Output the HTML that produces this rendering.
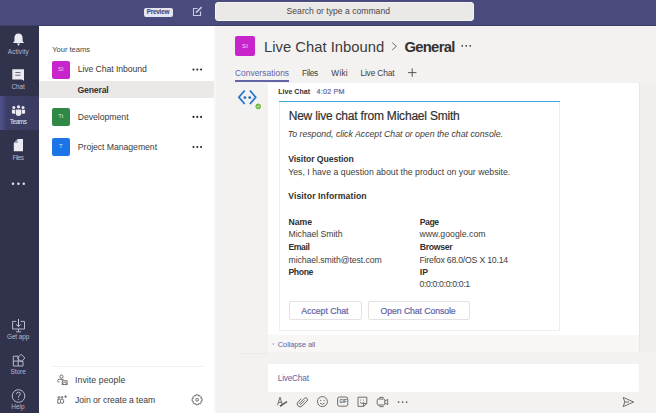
<!DOCTYPE html>
<html><head><meta charset="utf-8">
<style>
*{margin:0;padding:0;box-sizing:border-box}
html,body{width:656px;height:413px;overflow:hidden;font-family:"Liberation Sans",sans-serif;background:#f3f2f1;position:relative}
.a{position:absolute}
.x{position:absolute;white-space:nowrap;line-height:1}
svg{position:absolute;overflow:visible}
</style></head><body>
<!-- top bar -->
<div class="a" style="left:0;top:0;width:656px;height:25.5px;background:#4a4b7c;border-bottom:0.8px solid #3d3e68"></div>
<div class="a" style="left:144px;top:7.5px;width:28.5px;height:9px;background:#e4e4f3;border-radius:2px"></div>
<div class="x" style="left:146.7px;top:9.4px;font-size:6.4px;letter-spacing:-0.233px;color:#3f4070;font-weight:bold;">Preview</div>
<svg style="left:0;top:0" width="656" height="25">
 <path d="M197.5 8.5 H193.5 V15.5 H200.5 V11.5" fill="none" stroke="#c9c9e6" stroke-width="1.1"/>
 <path d="M196 12.6 L201.6 7.2" fill="none" stroke="#c9c9e6" stroke-width="1.6"/>
</svg>
<div class="a" style="left:214.5px;top:1.5px;width:259.5px;height:19.5px;background:#ebe9e8;border:1px solid #f5f4f4;border-radius:3px"></div>
<div class="x" style="left:286.6px;top:7.3px;font-size:8.6px;letter-spacing:0.009px;color:#4a4847;">Search or type a command</div>

<!-- rail -->
<div class="a" style="left:0;top:25.5px;width:39.4px;height:388px;background:#31334c"></div>
<div class="a" style="left:0;top:96px;width:39.4px;height:34.4px;background:linear-gradient(90deg,#51538e 0,#4a4c84 2px,#3c3e66 7px,#3b3c60 100%)"></div>
<svg style="left:0;top:0" width="39" height="413">
 <!-- bell -->
 <path d="M18.5 33.6 C15.8 33.6 14.4 35.6 14.4 38.2 V41.3 L12.8 43.1 H24.2 L22.6 41.3 V38.2 C22.6 35.6 21.2 33.6 18.5 33.6 Z" fill="#ebebf1"/>
 <path d="M17 43.6 H20 L18.5 46 Z" fill="#ebebf1"/>
 <!-- chat -->
 <path d="M12.3 69.3 H24 V80.8 L21.6 79.4 H12.3 Z" fill="#ebebf1"/>
 <rect x="15.3" y="72" width="5.2" height="1" fill="#6a6a80"/>
 <rect x="15.3" y="74.7" width="5.2" height="1" fill="#6a6a80"/>
 <!-- teams -->
 <circle cx="13.8" cy="107.4" r="1.5" fill="#ebebf1"/>
 <circle cx="18.5" cy="106.8" r="1.6" fill="#ebebf1"/>
 <circle cx="23" cy="107.4" r="1.5" fill="#ebebf1"/>
 <path d="M11.9 109.8 H15.3 V113.8 H13 Q11.9 113.8 11.9 112.5 Z" fill="#ebebf1"/>
 <path d="M21.7 109.8 H25.1 V112.5 Q25.1 113.8 24 113.8 H21.7 Z" fill="#ebebf1"/>
 <path d="M15.9 109.4 H21.1 V114 Q21.1 116.1 18.5 116.1 Q15.9 116.1 15.9 114 Z" fill="#ebebf1"/>
 <!-- files -->
 <path d="M17.7 138.9 H23 V151.2 H13.8 V142.9 Z" fill="#ebebf1"/>
 <path d="M13.8 142.9 L17.7 138.9 V142.9 Z" fill="#9a9ab8"/>
 <!-- dots -->
 <circle cx="13" cy="183.7" r="1.2" fill="#e6e6ee"/>
 <circle cx="18.4" cy="183.7" r="1.2" fill="#e6e6ee"/>
 <circle cx="23.8" cy="183.7" r="1.2" fill="#e6e6ee"/>
 <!-- get app -->
 <path d="M16.3 321.4 H12.6 V329 H24.5 V321.4 H20.7" fill="none" stroke="#b9b9cf" stroke-width="1"/>
 <path d="M18.5 319 V326.5 M16.2 324.4 L18.5 326.7 L20.8 324.4" fill="none" stroke="#c9c9dd" stroke-width="1"/>
 <path d="M18.5 329 V331.5 M16 331.8 H21" fill="none" stroke="#b9b9cf" stroke-width="1"/>
 <!-- store -->
 <path d="M13.3 356.2 H18.2 V366 H13.3 Z M13.3 361.1 H23 V366 H18.2" fill="none" stroke="#b9b9cf" stroke-width="1"/>
 <path d="M21.1 354.3 L24.9 358 L21.1 361.7 L17.4 358 Z" fill="none" stroke="#b9b9cf" stroke-width="1"/>
 <!-- help -->
 <circle cx="18.5" cy="396" r="6.3" fill="none" stroke="#b9b9cf" stroke-width="1"/>
 <path d="M16.5 394.2 Q16.6 392.2 18.5 392.2 Q20.4 392.2 20.4 394 Q20.4 395.2 18.5 396.2 V397.6" fill="none" stroke="#b9b9cf" stroke-width="1"/>
 <circle cx="18.5" cy="399.5" r="0.6" fill="#b9b9cf"/>
</svg>
<div class="x" style="left:7.8px;top:49.0px;font-size:6.4px;letter-spacing:0.1px;color:#b8b9cc;">Activity</div><div class="x" style="left:11.6px;top:83.9px;font-size:6.4px;letter-spacing:-0.133px;color:#b8b9cc;">Chat</div><div class="x" style="left:9.7px;top:119.4px;font-size:6.4px;letter-spacing:-0.375px;color:#e8e8f0;">Teams</div><div class="x" style="left:12.6px;top:154.6px;font-size:6.4px;letter-spacing:-0.55px;color:#b8b9cc;">Files</div><div class="x" style="left:7.0px;top:334.2px;font-size:6.4px;letter-spacing:-0.083px;color:#b8b9cc;">Get app</div><div class="x" style="left:10.5px;top:369.2px;font-size:6.4px;letter-spacing:0.0px;color:#b8b9cc;">Store</div><div class="x" style="left:11.3px;top:404.4px;font-size:6.4px;letter-spacing:0.033px;color:#b8b9cc;">Help</div>

<!-- teams panel -->
<div class="a" style="left:39.4px;top:25.5px;width:175.6px;height:388px;background:#fff"></div>
<div class="a" style="left:213px;top:25.5px;width:3px;height:388px;background:linear-gradient(90deg,#fff,#f3f2f1)"></div>
<div class="x" style="left:52.3px;top:46.0px;font-size:7.6px;letter-spacing:-0.044px;color:#484644;">Your teams</div>
<div class="a" style="left:52.2px;top:61px;width:17.4px;height:17.5px;background:#c824cc;border-radius:2px"></div>
<div class="x" style="left:52.2px;top:61px;width:17.4px;height:17.5px;line-height:17.5px;text-align:center;font-size:6px;color:#f3c8f4">SI</div>
<div class="x" style="left:77.7px;top:65.2px;font-size:8.7px;letter-spacing:-0.087px;color:#3d3c3b;">Live Chat Inbound</div>
<div class="a" style="left:39.4px;top:81px;width:175px;height:17px;background:#eae9e8"></div>
<div class="x" style="left:77.4px;top:85.8px;font-size:8.7px;letter-spacing:-0.167px;color:#323130;font-weight:bold;">General</div>
<div class="a" style="left:52.2px;top:108px;width:17.4px;height:17.5px;background:#2f8845;border-radius:2px"></div>
<div class="x" style="left:52.2px;top:108px;width:17.4px;height:17.5px;line-height:17.5px;text-align:center;font-size:6px;color:#cfe6d4">Tt</div>
<div class="x" style="left:77.7px;top:112.6px;font-size:8.7px;letter-spacing:-0.03px;color:#3d3c3b;">Development</div>
<div class="a" style="left:52.2px;top:138px;width:17.4px;height:17.5px;background:#1c74e6;border-radius:2px"></div>
<div class="x" style="left:52.2px;top:138px;width:17.4px;height:17.5px;line-height:17.5px;text-align:center;font-size:6px;color:#d3e4fa">T</div>
<div class="x" style="left:77.8px;top:142.8px;font-size:8.7px;letter-spacing:-0.053px;color:#3d3c3b;">Project Management</div>
<svg style="left:0;top:0" width="215" height="413">
 <g fill="#252424">
 <circle cx="193.5" cy="69.5" r="1.05"/><circle cx="197.3" cy="69.5" r="1.05"/><circle cx="201.1" cy="69.5" r="1.05"/>
 <circle cx="193.5" cy="116.9" r="1.05"/><circle cx="197.3" cy="116.9" r="1.05"/><circle cx="201.1" cy="116.9" r="1.05"/>
 <circle cx="193.5" cy="147" r="1.05"/><circle cx="197.3" cy="147" r="1.05"/><circle cx="201.1" cy="147" r="1.05"/>
 </g>
 <rect x="52" y="366" width="152" height="0.8" fill="#ececec"/>
 <!-- invite icon -->
 <g fill="none" stroke="#605e5c" stroke-width="0.9">
  <circle cx="61.4" cy="376.6" r="1.6"/>
  <path d="M63.6 379.3 H59.2 Q57.6 379.3 57.6 380.6 Q57.6 382 59.4 382.2"/>
  <rect x="62.2" y="380.8" width="4.9" height="3.8"/>
  <path d="M62.4 383.6 L64.6 382.2 L66.9 383.6"/>
 </g>
 <!-- join icon -->
 <g fill="none" stroke="#605e5c" stroke-width="0.9">
  <circle cx="58.8" cy="397.4" r="0.9"/>
  <circle cx="62" cy="397.4" r="0.9"/>
  <path d="M60.4 399.2 H57.8 V403.2 H60.4"/>
  <rect x="60.6" y="399.4" width="3" height="3.8" rx="1"/>
  <path d="M65.6 395.4 V397.9 M64.35 396.65 H66.85"/>
 </g>
 <!-- gear -->
 <g transform="translate(197.1 399.8)" fill="none" stroke="#605e5c" stroke-width="0.9">
  <path d="M-1.2 -5 L1.2 -5 L1.6 -3.6 L3 -4.2 L4.2 -3 L3.6 -1.6 L5 -1.2 L5 1.2 L3.6 1.6 L4.2 3 L3 4.2 L1.6 3.6 L1.2 5 L-1.2 5 L-1.6 3.6 L-3 4.2 L-4.2 3 L-3.6 1.6 L-5 1.2 L-5 -1.2 L-3.6 -1.6 L-4.2 -3 L-3 -4.2 L-1.6 -3.6 Z"/>
  <circle r="1.4"/>
 </g>
</svg>
<div class="x" style="left:75.0px;top:375.8px;font-size:8.7px;letter-spacing:0.083px;color:#3d3c3b;">Invite people</div><div class="x" style="left:75.0px;top:396.3px;font-size:8.7px;letter-spacing:-0.07px;color:#3d3c3b;">Join or create a team</div>

<!-- main header -->
<div class="a" style="left:235px;top:35.9px;width:20px;height:20px;background:#c824cc;border-radius:2px"></div>
<div class="x" style="left:235px;top:35.9px;width:20px;height:20px;line-height:20px;text-align:center;font-size:6.2px;color:#f6d3f5">SI</div>
<div class="x" style="left:264.1px;top:39.8px;font-size:14.8px;letter-spacing:-0.006px;color:#3d3c3b;">Live Chat Inbound</div><div class="x" style="left:404.4px;top:39.7px;font-size:14.8px;letter-spacing:-0.683px;color:#323130;font-weight:bold;">General</div>
<svg style="left:0;top:0" width="656" height="90">
 <g fill="#252424"><circle cx="462.2" cy="45.9" r="0.8"/><circle cx="466.2" cy="45.9" r="0.8"/><circle cx="470.2" cy="45.9" r="0.8"/></g>
 <path d="M412.2 68.4 V76.8 M408 72.6 H416.4" stroke="#484644" stroke-width="0.9" fill="none"/>
 <path d="M392.2 42.6 L396.4 46.3 L392.2 50" stroke="#605e5c" stroke-width="0.9" fill="none"/>
</svg>
<div class="x" style="left:234.9px;top:69.1px;font-size:8.4px;letter-spacing:0.05px;color:#6264a7;">Conversations</div><div class="x" style="left:301.9px;top:69.3px;font-size:8.4px;letter-spacing:-0.325px;color:#3d3c3b;">Files</div><div class="x" style="left:331.3px;top:69.3px;font-size:8.4px;letter-spacing:0.2px;color:#3d3c3b;">Wiki</div><div class="x" style="left:360.4px;top:69.3px;font-size:8.4px;letter-spacing:-0.15px;color:#3d3c3b;">Live Chat</div>
<div class="a" style="left:235px;top:79.8px;width:54.2px;height:2px;background:#6264a7"></div>

<!-- thread -->
<div class="a" style="left:267.5px;top:83px;width:371px;height:251.5px;background:#fff"></div>
<div class="a" style="left:267.5px;top:334.5px;width:371px;height:17.8px;background:#f8f7f6"></div>
<div class="a" style="left:638.5px;top:83px;width:1.5px;height:269px;background:#e8e7e6"></div>
<div class="a" style="left:640px;top:83px;width:16px;height:269px;background:#f0efee"></div>
<div class="a" style="left:237px;top:353.2px;width:31px;height:0.8px;background:#ebeae9"></div>
<svg style="left:0;top:0" width="656" height="413">
 <g fill="none" stroke="#d6eafc" stroke-width="3" stroke-linejoin="miter">
  <path d="M244.7 90.6 L238.9 97.3 L244.7 104 M249.9 90.6 L255.7 97.3 L249.9 104"/>
 </g>
 <g fill="none" stroke="#2a6fbf" stroke-width="1.6">
  <path d="M244.7 90.6 L238.9 97.3 L244.7 104 M249.9 90.6 L255.7 97.3 L249.9 104"/>
 </g>
 <circle cx="244.9" cy="97.6" r="1.45" fill="#2a6fbf"/>
 <circle cx="249.7" cy="97.6" r="1.45" fill="#2a6fbf"/>
 <circle cx="258.2" cy="106.4" r="3.6" fill="#fff"/>
 <circle cx="258.2" cy="106.4" r="2.8" fill="#74b943"/>
 <path d="M256.8 106.5 L257.8 107.4 L259.6 105.5" stroke="#fff" stroke-width="0.8" fill="none"/>
</svg>
<div class="x" style="left:278.2px;top:87.9px;font-size:7.0px;letter-spacing:0.038px;color:#323130;font-weight:bold;">Live Chat</div><div class="x" style="left:316.6px;top:87.9px;font-size:7.2px;letter-spacing:0.2px;color:#6264a7;-webkit-text-stroke:0.2px currentColor;">4:02 PM</div>
<!-- card -->
<div class="a" style="left:278.5px;top:101px;width:281px;height:229.8px;background:#fff;border:1px solid #efeeed;border-top:none"></div>
<div class="a" style="left:278.5px;top:101px;width:281px;height:1.4px;background:#3eaad9"></div>
<div class="x" style="left:288.7px;top:109.5px;font-size:12.0px;letter-spacing:-0.203px;color:#323130;-webkit-text-stroke:0.2px currentColor;">New live chat from Michael Smith</div><div class="x" style="left:287.7px;top:129.8px;font-size:8.8px;letter-spacing:-0.031px;color:#3d3c3b;font-style:italic;">To respond, click Accept Chat or open the chat console.</div><div class="x" style="left:288.2px;top:155.3px;font-size:8.7px;letter-spacing:-0.087px;color:#323130;font-weight:bold;">Visitor Question</div><div class="x" style="left:288.2px;top:167.7px;font-size:8.7px;letter-spacing:0.021px;color:#3d3c3b;">Yes, I have a question about the product on your website.</div><div class="x" style="left:288.2px;top:192.4px;font-size:8.7px;letter-spacing:0.078px;color:#323130;font-weight:bold;">Visitor Information</div>
<div class="x" style="left:288.5px;top:217.7px;font-size:8.7px;letter-spacing:-0.067px;color:#323130;font-weight:bold;">Name</div><div class="x" style="left:288.5px;top:230.4px;font-size:8.7px;letter-spacing:-0.042px;color:#3d3c3b;">Michael Smith</div><div class="x" style="left:288.5px;top:242.6px;font-size:8.7px;letter-spacing:-0.45px;color:#323130;font-weight:bold;">Email</div><div class="x" style="left:288.5px;top:255.5px;font-size:8.7px;letter-spacing:-0.071px;color:#3d3c3b;">michael.smith@test.com</div><div class="x" style="left:288.5px;top:267.8px;font-size:8.7px;letter-spacing:-0.425px;color:#323130;font-weight:bold;">Phone</div>
<div class="x" style="left:419.8px;top:217.7px;font-size:8.7px;letter-spacing:-0.5px;color:#323130;font-weight:bold;">Page</div><div class="x" style="left:419.5px;top:230.4px;font-size:8.7px;letter-spacing:0.023px;color:#3d3c3b;">www.google.com</div><div class="x" style="left:419.8px;top:242.6px;font-size:8.7px;letter-spacing:-0.317px;color:#323130;font-weight:bold;">Browser</div><div class="x" style="left:419.5px;top:255.5px;font-size:8.7px;letter-spacing:-0.209px;color:#3d3c3b;">Firefox 68.0/OS X 10.14</div><div class="x" style="left:419.8px;top:267.8px;font-size:8.7px;letter-spacing:0.0px;color:#323130;font-weight:bold;">IP</div><div class="x" style="left:419.5px;top:280.1px;font-size:8.7px;letter-spacing:-0.357px;color:#3d3c3b;">0:0:0:0:0:0:0:1</div>
<div class="a" style="left:288.5px;top:300.5px;width:73.2px;height:19px;border:1px solid #e4e2e0;border-radius:2px;background:#fff"></div>
<div class="a" style="left:367.5px;top:300.5px;width:102px;height:19px;border:1px solid #e4e2e0;border-radius:2px;background:#fff"></div>
<div class="x" style="left:301.3px;top:307.4px;font-size:8.7px;letter-spacing:-0.01px;color:#6264a7;-webkit-text-stroke:0.2px currentColor;">Accept Chat</div><div class="x" style="left:380.6px;top:307.4px;font-size:8.7px;letter-spacing:-0.075px;color:#6264a7;-webkit-text-stroke:0.2px currentColor;">Open Chat Console</div>
<svg style="left:0;top:0" width="300" height="413">
 <path d="M271.8 343.4 H274.8 L273.3 345 Z" fill="#a6a7cf"/>
</svg>
<div class="x" style="left:277.8px;top:340.9px;font-size:7.5px;letter-spacing:-0.127px;color:#6264a7;">Collapse all</div>

<!-- compose -->
<div class="a" style="left:267.5px;top:364.2px;width:371px;height:27.6px;background:#fff;border-radius:2px"></div>
<div class="x" style="left:277.8px;top:374.4px;font-size:8.3px;letter-spacing:-0.229px;color:#6264a7;">LiveChat</div>
<svg style="left:0;top:0" width="656" height="413">
 <g fill="none" stroke="#605e5c" stroke-width="0.9">
  <!-- format -->
  <path d="M277.5 405.2 L280 397.2 L282.5 405.2 M278.4 402.4 H281.6"/>
  <path d="M280 406.2 Q283 404.2 287 401.6" stroke-width="1.7"/>
  <!-- clip -->
  <path transform="translate(302.4 401.6) rotate(45)" d="M0.9 -2.5 V2.6 A0.9 0.9 0 0 1 -0.9 2.6 V-3.6 A1.9 1.9 0 0 1 2.9 -3.6 V3.2 A2.9 2.9 0 0 1 -2.9 3.2 V-1.2"/>
  <!-- emoji -->
  <circle cx="322.4" cy="401.6" r="5"/>
  <path d="M320.2 403.2 Q322.4 405.4 324.6 403.2"/>
  <!-- gif -->
  <rect x="337.6" y="397" width="10.2" height="9.2" rx="2"/>
  <!-- sticker -->
  <path d="M358 397.2 H366.8 V403.5 L363.5 406.4 H358 Z M363.5 406.4 V403.5 H366.8"/>
  <path d="M360 402.4 Q362.1 404.6 364.2 402.4"/>
  <!-- meet -->
  <rect x="377.2" y="399" width="7.6" height="6" rx="1.2"/>
  <path d="M384.8 401 L387.7 399.4 V404.6 L384.8 403"/>
  <path d="M378.7 398.4 A4.4 4.4 0 0 1 383.6 397.6 M378.7 405.6 A4.4 4.4 0 0 0 383.6 406.4"/>
  <!-- send -->
  <path d="M623.2 397.4 L633.6 402 L623.2 406.6 L624.8 402 Z M624.8 402 H629"/>
 </g>
 <g fill="#605e5c">
  <circle cx="320.7" cy="400.3" r="0.6"/><circle cx="324.1" cy="400.3" r="0.6"/>
  <circle cx="360.6" cy="399.9" r="0.5"/><circle cx="363.5" cy="399.9" r="0.5"/>
  <circle cx="398.6" cy="402.1" r="0.9"/><circle cx="402.6" cy="402.1" r="0.9"/><circle cx="406.6" cy="402.1" r="0.9"/>
 </g>
</svg>
<div class="x" style="left:339.6px;top:399.5px;font-size:4.6px;font-weight:bold;color:#605e5c;letter-spacing:-0.2px">GIF</div>
</body></html>
